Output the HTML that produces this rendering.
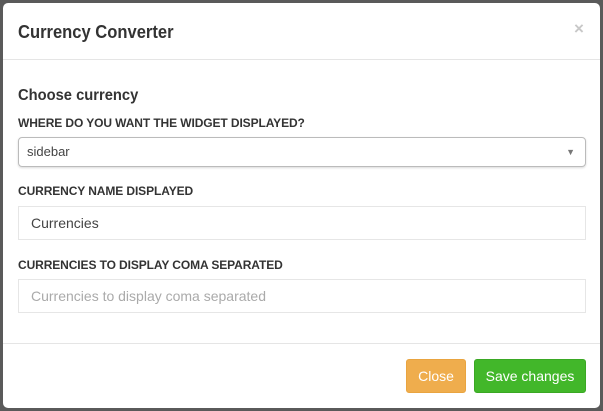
<!DOCTYPE html>
<html><head><style>
*{box-sizing:border-box;margin:0;padding:0}
body{width:603px;height:411px;background:#5a5a5a;font-family:"Liberation Sans",sans-serif;position:relative;overflow:hidden}
.m{position:absolute;left:3px;top:3px;width:597px;height:405px;background:#fff;border-radius:5px}
.t{position:absolute;left:15px;top:19px;font-size:18px;font-weight:bold;color:#333;transform:scaleX(0.92);transform-origin:left;white-space:nowrap}
.x{position:absolute;left:571px;top:16px;font-size:17px;color:#c8c8c8;font-weight:bold}
.hl{position:absolute;left:0;right:0;height:1px;background:#e5e5e5}
.h{position:absolute;left:15px;top:84px;font-size:16px;font-weight:bold;color:#333;transform:scaleX(0.92);transform-origin:left;white-space:nowrap}
.l{position:absolute;left:15px;font-size:12px;font-weight:bold;color:#333;letter-spacing:-0.1px;white-space:nowrap}
.i{position:absolute;left:15px;width:568px;border:1px solid #e6e6e6;font-size:14px;padding-left:12px;color:#444}
.s{border:1px solid #bbb;border-radius:4px;box-shadow:0 1px 2px rgba(0,0,0,.15);padding-left:8px;font-size:13px}
.b{position:absolute;top:356px;height:34px;border-radius:3px;color:#fff;font-size:14px;text-align:center;line-height:33px}
</style></head><body>
<div class="m">
<div class="t">Currency Converter</div>
<div class="x">×</div>
<div class="hl" style="top:56px"></div>
<div class="h">Choose currency</div>
<div class="l" style="top:113px">WHERE DO YOU WANT THE WIDGET DISPLAYED?</div>
<div class="i s" style="top:134px;height:30px;line-height:28px">sidebar<span style="position:absolute;right:10px;font-size:9px;color:#777">▼</span></div>
<div class="l" style="top:181px">CURRENCY NAME DISPLAYED</div>
<div class="i" style="top:203px;height:34px;line-height:32px">Currencies</div>
<div class="l" style="top:255px">CURRENCIES TO DISPLAY COMA SEPARATED</div>
<div class="i" style="top:276px;height:34px;line-height:32px;color:#aaa">Currencies to display coma separated</div>
<div class="hl" style="top:340px"></div>
<div class="b" style="left:403px;width:60px;background:#efad4d;border:1px solid #e9a440">Close</div>
<div class="b" style="left:471px;width:112px;background:#42b72a;border:1px solid #3aa824">Save changes</div>
</div>
</body></html>
